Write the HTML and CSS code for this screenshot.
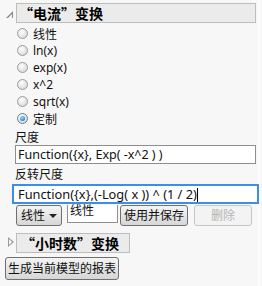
FILE: index.html
```html
<!DOCTYPE html>
<html lang="zh-CN">
<head>
  <meta charset="UTF-8" />
  <meta name="viewport" content="width=device-width, initial-scale=1.0"/>
  <title>变换</title>
  <link rel="stylesheet" href="styles.css">
</head>
<body>
  <div class="panel">
    <div class="outline-head">
      <span class="disclosure open"></span>
      <div class="title-box wide">“电流”变换</div>
    </div>

    <div class="outline-body">
      <ul class="radio-list">
        <li><span class="radio"></span>线性</li>
        <li><span class="radio"></span>ln(x)</li>
        <li><span class="radio"></span>exp(x)</li>
        <li><span class="radio"></span>x^2</li>
        <li><span class="radio"></span>sqrt(x)</li>
        <li><span class="radio checked"></span>定制</li>
      </ul>

      <div class="field-label">尺度</div>
      <div class="textbox">Function({x}, Exp( -x^2 ) )</div>

      <div class="field-label">反转尺度</div>
      <div class="textbox focused">Function({x},(-Log( x )) ^ (1 / 2)<span class="caret"></span></div>

      <div class="btn-row">
        <button class="btn combo"><span>线性</span><span class="arrow"></span></button>
        <div class="mini-input">线性</div>
        <button class="btn">使用并保存</button>
        <button class="btn disabled" disabled>删除</button>
      </div>
    </div>

    <div class="outline-head second">
      <span class="disclosure closed"></span>
      <div class="title-box">“小时数”变换</div>
    </div>

    <button class="btn report">生成当前模型的报表</button>
  </div>
</body>
</html>
```

FILE: styles.css
```css
body {
  margin: 0;
  background: #f7f7f7;
  font-family: 'Noto Sans', 'Noto Sans CJK SC', sans-serif;
  font-size: 12px;
  color: #111;
}
.panel {
  width: 260px;
  height: 286px;
  border-right: 2px solid #fdfdfd;
  padding-top: 3px;
  box-sizing: border-box;
}
.outline-head {
  display: flex;
  align-items: center;
  height: 20px;
}
.disclosure {
  width: 16px;
  height: 20px;
  position: relative;
}
.disclosure.open::after {
  content: '';
  position: absolute;
  left: 6px;
  top: 8px;
  width: 0;
  height: 0;
  border-left: 7px solid transparent;
  border-bottom: 7px solid #8a8a8a;
}
.disclosure.open::before {
  content: '';
  position: absolute;
  left: 8px;
  top: 11px;
  width: 0;
  height: 0;
  border-left: 4px solid transparent;
  border-bottom: 4px solid #f7f7f7;
  z-index: 1;
}
.disclosure.closed::after {
  content: '';
  position: absolute;
  left: 8px;
  top: 4px;
  width: 0;
  height: 0;
  border-top: 5px solid transparent;
  border-bottom: 5px solid transparent;
  border-left: 6px solid #9a9a9a;
}
.disclosure.closed::before {
  content: '';
  position: absolute;
  left: 9px;
  top: 6px;
  width: 0;
  height: 0;
  border-top: 3px solid transparent;
  border-bottom: 3px solid transparent;
  border-left: 3px solid #f7f7f7;
  z-index: 1;
}
.title-box {
  height: 20px;
  line-height: 19px;
  box-sizing: border-box;
  background: #ebebeb;
  border: 1px solid #bdbdbd;
  font-family: 'Noto Sans CJK SC', sans-serif;
  font-weight: bold;
  font-size: 14px;
  padding: 0 10px 0 2px;
  color: #000;
}
.title-box.wide {
  width: 240px;
}
.outline-body {
  padding-left: 15px;
  padding-right: 5px;
}
.radio-list {
  list-style: none;
  margin: 2px 0 0 0;
  padding: 0 0 0 2px;
}
.radio-list li {
  height: 17px;
  display: flex;
  align-items: center;
  gap: 5px;
}
.radio {
  width: 11px;
  height: 11px;
  border-radius: 50%;
  border: 1px solid #9c9c9c;
  background: radial-gradient(circle at 40% 35%, #ffffff, #e2e2e2 60%, #cfcfcf);
  box-sizing: border-box;
  position: relative;
}
.radio.checked {
  border-color: #6d7f8f;
}
.radio.checked::after {
  content: '';
  position: absolute;
  left: 2px;
  top: 2px;
  width: 5px;
  height: 5px;
  border-radius: 50%;
  background: radial-gradient(circle at 40% 35%, #9fdcff, #2a86c8 70%, #155e96);
}
.field-label {
  height: 17px;
  line-height: 19px;
  margin-top: 1px;
}
.textbox {
  height: 19px;
  line-height: 17px;
  box-sizing: border-box;
  border: 1px solid #8e8e8e;
  background: #fff;
  padding: 0 2px;
  width: 241px;
  white-space: nowrap;
  overflow: hidden;
  font-size: 12.5px;
}
.textbox.focused {
  border: 2px solid #3c8fe6;
  width: 247px;
  height: 20px;
  line-height: 16px;
  margin-left: -3px;
  padding-left: 4px;
  margin-top: 2px;
  font-size: 12.8px;
}
.caret {
  display: inline-block;
  width: 1px;
  height: 14px;
  background: #000;
  vertical-align: -3px;
}
.btn-row {
  display: flex;
  align-items: flex-start;
  margin-top: 1px;
  margin-left: 1px;
}
.btn {
  font-family: inherit;
  font-size: 12px;
  height: 21px;
  padding: 0 3px;
  border: 1px solid #6f6f6f;
  border-radius: 3px;
  background: linear-gradient(#f4f4f4, #e6e6e6 50%, #d6d6d6);
  color: #111;
  line-height: 18px;
  white-space: nowrap;
}
.btn.combo {
  width: 46px;
  padding: 0 4px;
  display: flex;
  align-items: center;
  justify-content: space-between;
}
.arrow {
  width: 0;
  height: 0;
  border-left: 4px solid transparent;
  border-right: 4px solid transparent;
  border-top: 4px solid #222;
}
.mini-input {
  width: 51px;
  height: 18px;
  box-sizing: border-box;
  border: 1px solid #8e8e8e;
  border-top: none;
  background: #fff;
  margin-left: 5px;
  line-height: 12px;
  padding-left: 2px;
}
.btn-row .btn + .btn,
.mini-input + .btn {
  margin-left: 2px;
}
.btn.disabled {
  width: 58px;
  margin-left: 6px !important;
  border-color: #c6c6c6;
  color: #b4b4b4;
  background: #f3f3f3;
}
.outline-head.second {
  margin-top: 7px;
}
.outline-head.second .title-box {
  padding: 0 10px 0 4px;
}
.btn.report {
  margin: 4px 0 0 5px;
  height: 23px;
  padding: 0 2px;
}
```
